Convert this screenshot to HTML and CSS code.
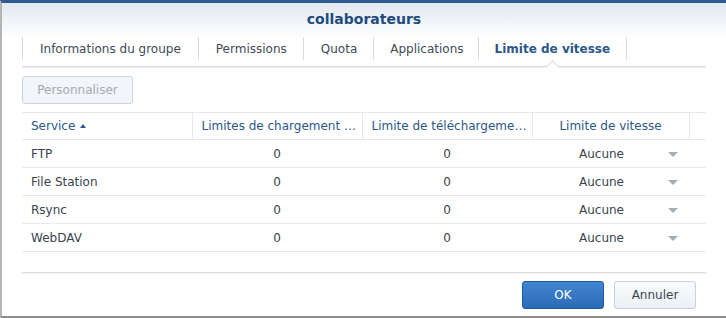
FILE: index.html
```html
<!DOCTYPE html>
<html lang="fr">

<head>
  <meta charset="UTF-8" />
  <meta name="viewport" content="width=device-width, initial-scale=1.0" />
  <title>collaborateurs</title>

  <link rel="stylesheet" href="styles.css">
</head>

<body>
  <div class="window">
    <div class="titlebar">collaborateurs</div>

    <div class="content">
      <ul class="tabs">
        <li class="first">Informations du groupe</li>
        <li>Permissions</li>
        <li>Quota</li>
        <li class="narrow">Applications</li>
        <li class="active">Limite de vitesse</li>
      </ul>

      <div class="toolbar">
        <button class="btn" disabled>Personnaliser</button>
      </div>

      <table class="grid">
        <thead>
          <tr>
            <th class="col-service">Service <span class="sort"></span></th>
            <th class="col-num">Limites de chargement …</th>
            <th class="col-num">Limite de téléchargeme…</th>
            <th class="col-limit">Limite de vitesse</th>
            <th class="col-pad"></th>
          </tr>
        </thead>
        <tbody>
          <tr>
            <td>FTP</td>
            <td class="num">0</td>
            <td class="num">0</td>
            <td class="combo">Aucune <span class="arrow"></span></td>
            <td></td>
          </tr>
          <tr>
            <td>File Station</td>
            <td class="num">0</td>
            <td class="num">0</td>
            <td class="combo">Aucune <span class="arrow"></span></td>
            <td></td>
          </tr>
          <tr>
            <td>Rsync</td>
            <td class="num">0</td>
            <td class="num">0</td>
            <td class="combo">Aucune <span class="arrow"></span></td>
            <td></td>
          </tr>
          <tr>
            <td>WebDAV</td>
            <td class="num">0</td>
            <td class="num">0</td>
            <td class="combo">Aucune <span class="arrow"></span></td>
            <td></td>
          </tr>
        </tbody>
      </table>
      <div class="grid-end"></div>
    </div>

    <div class="footer">
      <button class="btn btn-primary">OK</button>
      <button class="btn btn-default">Annuler</button>
    </div>
  </div>
</body>

</html>
```

FILE: styles.css
```css
* {
  box-sizing: border-box;
  font-family: "DejaVu Sans", Verdana, sans-serif;
}

body {
  margin: 0;
  background-color: #fff;
}

.window {
  height: 318px;
  display: flex;
  flex-direction: column;
  border-top: 3px solid #2f5a8c;
  border-left: 2px solid #b4b4b4;
  border-bottom: 2px solid #8c8c8c;
  background: linear-gradient(#e1e8f1, #fff 36px);
}

.titlebar {
  height: 34px;
  padding-top: 8px;
  text-align: center;
  font-size: 14px;
  font-weight: bold;
  color: #1f4b7d;
}

.content {
  flex: 1;
  padding: 0 20px;
}

/* tabs */
.tabs {
  list-style: none;
  margin: 0;
  padding: 0;
  display: flex;
  height: 30px;
  border-bottom: 1px solid #d5dbe2;
  box-shadow: 0 1px 0 #eef1f4;
}

.tabs li {
  position: relative;
  margin-bottom: 6px;
  padding: 5px 16px 0 17px;
  border-left: 1px solid #d4dce6;
  font-size: 12px;
  color: #404a55;
}

.tabs li.first {
  padding-right: 17px;
}

.tabs li.narrow {
  padding: 5px 14px 0 16px;
}

.tabs li.active {
  border-right: 1px solid #d4dce6;
  padding: 5px 16px 0 16px;
  color: #2b5789;
  font-weight: bold;
}

.tabs li.active::after {
  content: "";
  position: absolute;
  left: 50%;
  bottom: -11px;
  width: 8px;
  height: 8px;
  margin-left: -4px;
  background: #fff;
  border-left: 1px solid #d5dbe2;
  border-top: 1px solid #d5dbe2;
  transform: rotate(45deg);
}

/* buttons */
.toolbar {
  padding: 9px 0 8px;
}

.btn {
  height: 28px;
  padding: 0 15px;
  border-radius: 3px;
  font-size: 12px;
}

.btn[disabled] {
  width: 111px;
  padding: 0;
  border: 1px solid #cdd6e0;
  background: #f2f5f9;
  color: #a3abb4;
}

.btn-primary {
  width: 82px;
  border: 1px solid #1f5aa0;
  background: linear-gradient(#4285d0, #2a6bb8);
  color: #fff;
}

.btn-default {
  width: 82px;
  border: 1px solid #c6d1dd;
  background: linear-gradient(#f9fbfd, #eaf0f6);
  color: #3b444e;
}

/* grid */
.grid {
  width: 100%;
  table-layout: fixed;
  border-collapse: collapse;
  font-size: 12px;
  color: #3a434d;
}

.grid th {
  height: 27px;
  padding: 0 9px;
  font-weight: normal;
  color: #2b5789;
  border-top: 1px solid #e3e8ee;
  border-bottom: 1px solid #e3e8ee;
  border-right: 1px solid #e3e8ee;
  white-space: nowrap;
  overflow: hidden;
}

.grid th:last-child {
  border-right: none;
}

.col-service {
  width: 170px;
  text-align: left;
}

.col-num {
  width: 170px;
}

.col-limit {
  width: 157px;
}

.sort {
  display: inline-block;
  width: 0;
  height: 0;
  margin-left: 1px;
  vertical-align: 2px;
  border-left: 3px solid transparent;
  border-right: 3px solid transparent;
  border-bottom: 4px solid #2b5789;
}

.grid td {
  height: 28px;
  padding: 0 9px;
  border-bottom: 1px solid #e6eaef;
}

.grid td.num {
  text-align: center;
}

.grid td.combo {
  position: relative;
  padding-right: 27px;
  text-align: center;
}

.arrow {
  position: absolute;
  right: 11px;
  top: 12px;
  width: 0;
  height: 0;
  border-left: 5px solid transparent;
  border-right: 5px solid transparent;
  border-top: 5px solid #a5adb6;
}

.grid-end {
  margin-top: 20px;
  border-top: 1px solid #d9dde2;
  box-shadow: 0 1px 1px #eef0f2;
}

/* footer */
.footer {
  display: flex;
  justify-content: flex-end;
  gap: 10px;
  padding: 0 30px 7px 0;
}
```
